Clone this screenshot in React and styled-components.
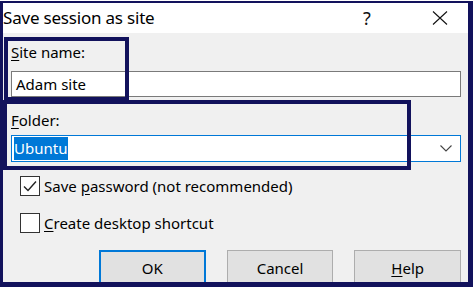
import React from 'react'
import styled, { createGlobalStyle } from 'styled-components'

const Global = createGlobalStyle`
  html, body { margin: 0; padding: 0; background: #fff; }
  body { font-family: "Segoe UI", "Noto Sans", "Liberation Sans", sans-serif; }
`;

const navy = '#12125c';
const accent = '#0078d7';

const Frame = styled.div`
  position: relative;
  box-sizing: border-box;
  width: 473px;
  height: 286px;
  margin-top: 1px;
  border-style: solid;
  border-color: ${navy};
  border-width: 2px 5px 5px 3px;
  display: flex;
  flex-direction: column;
  overflow: hidden;
  color: #000;
`;

const TitleBar = styled.div`
  height: 30px;
  flex: none;
  background: #fff;
  display: flex;
  align-items: center;
  font-size: 17px;
  padding-bottom: 1px;
  box-sizing: border-box;
`;

const Title = styled.div`
  flex: 1;
  letter-spacing: -0.2px;
`;

const TitleButton = styled.div`
  width: ${p => p.$w}px;
  margin-right: ${p => p.$gap || 0}px;
  display: flex;
  justify-content: center;
  align-items: center;
  font-size: 18px;
  color: #111;
`;

const Body = styled.div`
  flex: 1;
  background: #f0f0f0;
  display: flex;
  flex-direction: column;
  padding: 9px 7px 0 8px;
  font-size: 15px;
`;

const Label = styled.div`
  height: 20px;
  line-height: 20px;
  margin-top: ${p => p.$top || 0}px;
`;

const Field = styled.div`
  box-sizing: border-box;
  height: ${p => p.$h}px;
  margin-top: ${p => p.$top}px;
  border: 1px solid ${p => (p.$focus ? accent : '#7a7a7a')};
  background: #fff;
  display: flex;
  align-items: center;
  padding: 0 ${p => (p.$focus ? 2 : 4)}px;
`;

const Selected = styled.span`
  background: ${accent};
  color: #fff;
  line-height: 23px;
  padding-right: 1px;
  flex: none;
`;

const Spacer = styled.div`
  flex: 1;
`;

const CheckRow = styled.div`
  display: flex;
  align-items: center;
  gap: 4px;
  margin-top: ${p => p.$top}px;
  padding-left: 9px;
  height: 20px;
`;

const Box = styled.div`
  box-sizing: border-box;
  width: 20px;
  height: 20px;
  border: 1px solid #333;
  background: #fff;
  display: flex;
  align-items: center;
  justify-content: center;
`;

const Buttons = styled.div`
  display: flex;
  gap: 21px;
  margin-top: 17px;
  padding-left: 88px;
`;

const Button = styled.div`
  box-sizing: border-box;
  width: 108px;
  height: 36px;
  background: #e1e1e1;
  border: ${p => (p.$default ? `2px solid ${accent}` : '1px solid #adadad')};
  display: flex;
  justify-content: center;
  padding-top: ${p => (p.$default ? 6 : 7)}px;
  font-size: 15px;
`;

const Annot = styled.div`
  position: absolute;
  box-sizing: border-box;
  border: 4px solid ${navy};
  left: ${p => p.$x}px;
  top: ${p => p.$y}px;
  width: ${p => p.$w}px;
  height: ${p => p.$h}px;
  pointer-events: none;
`;

const U = styled.span`
  text-decoration: underline;
  text-underline-offset: 2px;
`;

const Check = () => (
  <svg width="14" height="12" viewBox="0 0 14 12">
    <path d="M1 6.5 L5 10.5 L13 1.5" fill="none" stroke="#222" strokeWidth="1.4" />
  </svg>
);

const Chevron = () => (
  <svg width="12" height="7" viewBox="0 0 12 7">
    <path d="M0.5 0.5 L6 6 L11.5 0.5" fill="none" stroke="#444" strokeWidth="1.1" />
  </svg>
);

const Close = () => (
  <svg width="16" height="14" viewBox="0 0 16 14">
    <path d="M1 0.5 L15 13.5 M15 0.5 L1 13.5" fill="none" stroke="#111" strokeWidth="1.1" />
  </svg>
);

export default function App() {
  return (
    <>
      <Global />
      <Frame>
        <TitleBar>
          <Title>Save session as site</Title>
          <TitleButton $w={46} $gap={27}>?</TitleButton>
          <TitleButton $w={46}><Close /></TitleButton>
          <TitleButton $w={5} />
        </TitleBar>
        <Body>
          <Label><U>S</U>ite name:</Label>
          <Field $h={26} $top={9}>Adam site</Field>
          <Label $top={13}><U>F</U>older:</Label>
          <Field $h={27} $top={5} $focus>
            <Selected>Ubuntu</Selected>
            <Spacer />
            <Chevron />
            <span style={{ width: 6 }} />
          </Field>
          <CheckRow $top={14}>
            <Box><Check /></Box>
            <span>Save <U>p</U>assword (not recommended)</span>
          </CheckRow>
          <CheckRow $top={17}>
            <Box />
            <span><U>C</U>reate desktop shortcut</span>
          </CheckRow>
          <Buttons>
            <Button $default>OK</Button>
            <Button>Cancel</Button>
            <Button><U>H</U>elp</Button>
          </Buttons>
        </Body>
        <Annot $x={1} $y={34} $w={125} $h={64} />
        <Annot $x={0} $y={97} $w={408} $h={70} />
      </Frame>
    </>
  );
}
